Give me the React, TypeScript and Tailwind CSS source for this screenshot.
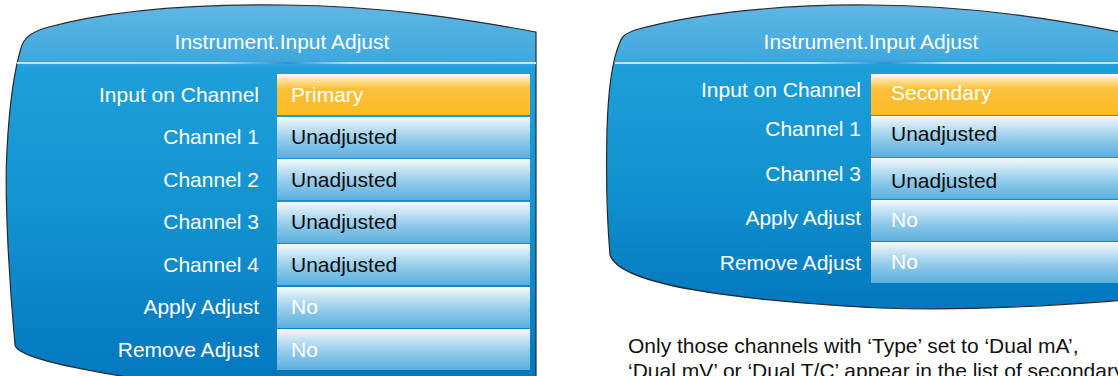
import React from "react";

type Row = {
  label: string;
  value: string;
  kind: "select" | "text" | "action";
  labelPad?: string;
  valuePad?: string;
};

const leftRows: Row[] = [
  { label: "Input on Channel", value: "Primary", kind: "select" },
  { label: "Channel 1", value: "Unadjusted", kind: "text" },
  { label: "Channel 2", value: "Unadjusted", kind: "text" },
  { label: "Channel 3", value: "Unadjusted", kind: "text" },
  { label: "Channel 4", value: "Unadjusted", kind: "text" },
  { label: "Apply Adjust", value: "No", kind: "action" },
  { label: "Remove Adjust", value: "No", kind: "action" },
];

const rightRows: Row[] = [
  { label: "Input on Channel", value: "Secondary", kind: "select", labelPad: "pb-[9px]", valuePad: "pb-[3px]" },
  { label: "Channel 1", value: "Unadjusted", kind: "text", labelPad: "pb-[15px]", valuePad: "pb-[6px]" },
  { label: "Channel 3", value: "Unadjusted", kind: "text", labelPad: "pb-[10px]", valuePad: "pt-[4px]" },
  { label: "Apply Adjust", value: "No", kind: "action", labelPad: "pb-[6px]", valuePad: "pb-[2px]" },
  { label: "Remove Adjust", value: "No", kind: "action", valuePad: "pb-[2px]" },
];

const boxBlue =
  "bg-[linear-gradient(to_bottom,#f6fbfd_0%,#d3e9f5_18%,#93cbea_55%,#5aafdf_100%)]";
const boxOrange =
  "bg-[linear-gradient(to_bottom,#fffbf2_0%,#fde2a0_14%,#fbc03a_36%,#fbbb25_100%)]";

function ValueBox({ row, width, padLeft }: { row: Row; width: string; padLeft: string }) {
  const bg = row.kind === "select" ? boxOrange : boxBlue;
  const color = row.kind === "text" ? "text-[#0d0d0d]" : "text-white";
  return (
    <div className={`${bg} ${width} ${padLeft} ${color} ${row.valuePad ?? ""} h-full flex items-center shrink-0`}>
      {row.value}
    </div>
  );
}

function Separator({ width, margin }: { width: string; margin: string }) {
  return (
    <div
      className={`${width} ${margin} h-[2px] bg-[linear-gradient(to_right,#c4e3f4_0%,#bcdff2_38%,#2c8fd2_52%,#bcdff2_64%,#c8e5f5_100%)]`}
    />
  );
}

function LeftPanel() {
  return (
    <div className="relative w-[560px] h-full shrink-0">
      <svg className="absolute left-0 top-0" width="560" height="376" viewBox="0 0 560 376">
        <defs>
          <linearGradient id="lg" x1="0" y1="0" x2="0" y2="376" gradientUnits="userSpaceOnUse">
            <stop offset="0" stopColor="#63b7e4" />
            <stop offset="0.16" stopColor="#3fa8de" />
            <stop offset="0.18" stopColor="#1e9fd9" />
            <stop offset="0.55" stopColor="#1394d1" />
            <stop offset="1" stopColor="#0478bf" />
          </linearGradient>
        </defs>
        <path
          d="M 15,345 C 10,290 4,200 7,150 C 9,110 13,75 21,48 C 24,38 30,33 45,28 C 110,10 200,4 285,5 C 380,6 460,18 536,32 L 536,400 L 250,400 C 150,378 20,365 15,345 Z"
          fill="url(#lg)"
          stroke="#2b2b2b"
          strokeWidth="1.2"
        />
      </svg>
      <div className="relative flex flex-col">
        <div className="ml-[27px] w-[510px] pt-[29px] h-[62px] text-center text-[21px] leading-[25px] text-white">
          Instrument.Input Adjust
        </div>
        <Separator width="w-[519px]" margin="ml-[17px]" />
        <div className="mt-[10px] flex flex-col gap-[1.5px] text-[21px]">
          {leftRows.map((row) => (
            <div key={row.label} className="flex items-center h-[41px]">
              <div className="w-[259px] text-right text-white shrink-0">{row.label}</div>
              <div className="ml-[18px] h-full">
                <ValueBox row={row} width="w-[253px]" padLeft="pl-[14px]" />
              </div>
            </div>
          ))}
        </div>
      </div>
    </div>
  );
}

function RightPanel() {
  return (
    <div className="relative ml-[20px] w-[538px] h-full shrink-0">
      <svg className="absolute left-0 top-0" width="538" height="376" viewBox="0 0 538 376">
        <defs>
          <linearGradient id="rg" x1="0" y1="0" x2="0" y2="310" gradientUnits="userSpaceOnUse">
            <stop offset="0" stopColor="#63b7e4" />
            <stop offset="0.19" stopColor="#3fa8de" />
            <stop offset="0.21" stopColor="#1e9fd9" />
            <stop offset="0.6" stopColor="#1192d0" />
            <stop offset="1" stopColor="#0477be" />
          </linearGradient>
        </defs>
        <path
          d="M 30,255 C 27,220 26,170 27,130 C 28,95 32,60 40,42 C 42,36 45,34 55,30 C 120,12 210,4 292,5 C 390,6 470,18 545,33 L 545,300 C 450,308 360,310 300,308 C 150,300 40,285 30,255 Z"
          fill="url(#rg)"
          stroke="#2b2b2b"
          strokeWidth="1.2"
        />
      </svg>
      <div className="relative flex flex-col">
        <div className="w-[582px] pt-[29px] h-[62px] text-center text-[21px] leading-[25px] text-white">
          Instrument.Input Adjust
        </div>
        <Separator width="w-[520px]" margin="ml-[35px]" />
        <div className="mt-[10px] flex flex-col gap-[1px] text-[21px]">
          {rightRows.map((row) => (
            <div key={row.label} className="flex items-center h-[41px]">
              <div className={`w-[281px] text-right text-white shrink-0 ${row.labelPad ?? ""}`}>{row.label}</div>
              <div className="ml-[10px] h-full">
                <ValueBox row={row} width="w-[260px]" padLeft="pl-[20px]" />
              </div>
            </div>
          ))}
        </div>
        <p className="mt-[50px] ml-[48px] w-[600px] text-[21px] leading-[25px] text-[#111]">
          Only those channels with ‘Type’ set to ‘Dual mA’,
          <br />
          ‘Dual mV’ or ‘Dual T/C’ appear in the list of secondary channels.
        </p>
      </div>
    </div>
  );
}

export default function App() {
  return (
    <div className="w-[1118px] h-[376px] overflow-hidden bg-white flex font-['Liberation_Sans',Arial,sans-serif]">
      <LeftPanel />
      <RightPanel />
    </div>
  );
}
